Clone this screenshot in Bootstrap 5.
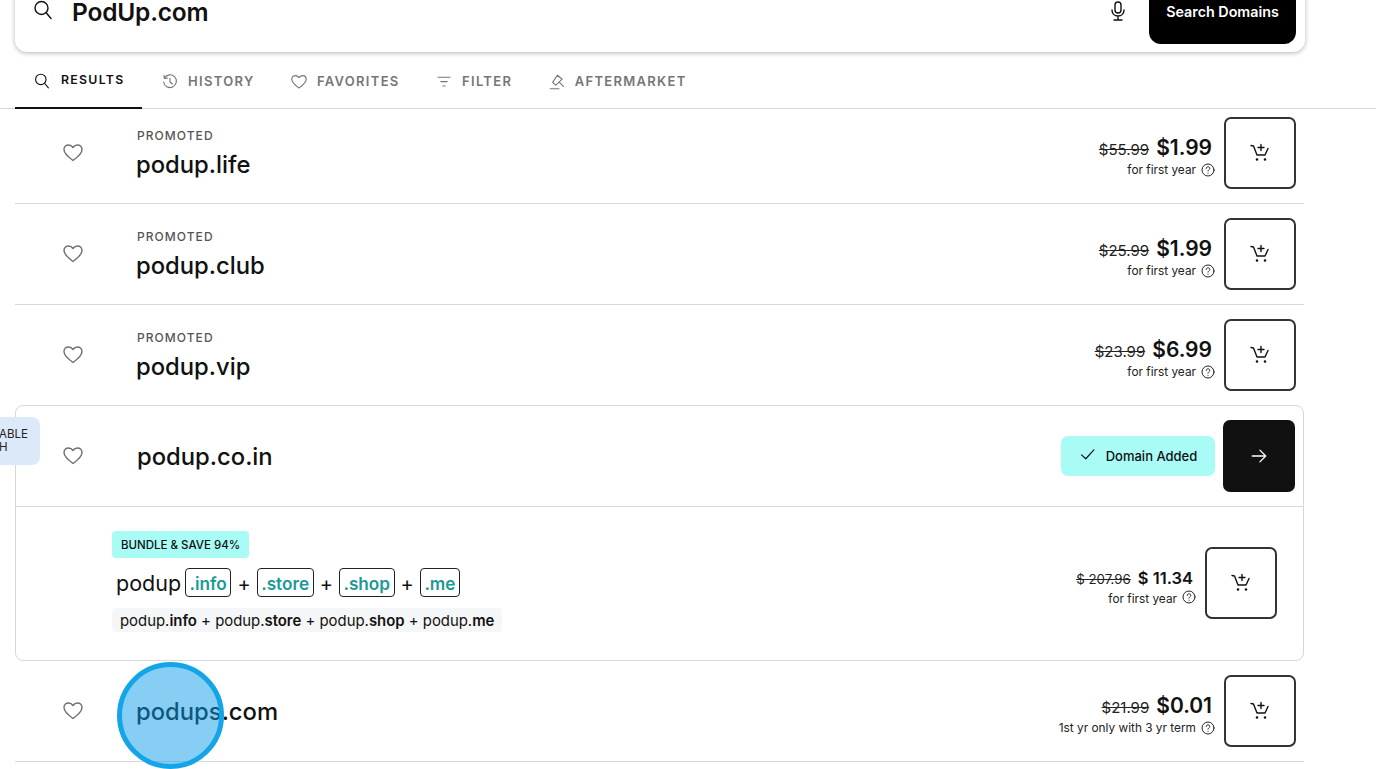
<!DOCTYPE html>
<html lang="en">
<head>
  <meta charset="UTF-8" />
  <title>PodUp.com domain search</title>
  <meta name="viewport" content="width=device-width, initial-scale=1" />
  <link href="https://cdn.jsdelivr.net/npm/bootstrap@5.3.2/dist/css/bootstrap.min.css" rel="stylesheet">
  <style>
    html, body { height: 769px; overflow: hidden; }
    body { font-family: "Inter", "Liberation Sans", sans-serif; color: #111; background: #fff; }
    svg.ico { fill: none; stroke: currentColor; stroke-width: 1.4; stroke-linecap: round; stroke-linejoin: round; flex: none; }
    svg.thin { stroke-width: 1; }

    .search-box { margin: -20px 71px 0 15px; height: 72px; padding: 0 9px 8px 18px; border-radius: 12px; background: #fff; box-shadow: 0 1px 5px rgba(0,0,0,.3); }
    .search-term { font-size: 24.5px; font-weight: 600; line-height: 1; letter-spacing: -.2px; margin-left: 19px; }
    .search-go { width: 147px; height: 64px; padding: 0; margin-left: 21px; background: #000; color: #fff; border-radius: 12px; border: 0; font-size: 14.3px; font-weight: 600; line-height: 1; align-self: flex-end; }
    .search-go:hover { background: #000; color: #fff; }
    .search-icon { margin-bottom: 4px; }
    .mic-icon { margin-bottom: 3px; }

    .tab-bar { height: 57px; padding-left: 15px; border-bottom: 1px solid #d6d6d6; }
    .tab-item { display: flex; align-items: center; gap: 10px; padding: 2px 17px 0 19.5px; margin: 0 0 -1px; height: 56px; color: #767676; font-size: 13px; font-weight: 600; letter-spacing: 1.3px; }
    .tab-item.on { color: #111; border-bottom: 2px solid #111; padding: 2px 17px 0 19px; margin-right: 1px; gap: 11px; font-size: 12.3px; height: 57px; }

    .result-list { width: 1289px; margin-left: 15px; }
    .result-row { height: 101px; padding: 14px 8px 14px 48px; border-bottom: 1px solid #d8d8d8; }
    .result-row.first { height: 95px; padding-top: 8px; }
    .result-row.before-card { height: 100px; border-bottom: 0; padding-bottom: 14px; }
    .fav { color: #6f6f6f; width: 20px; height: 20px; }
    .name-col { margin-left: 53px; }
    .promo { font-size: 12px; font-weight: 500; letter-spacing: 1.05px; color: #555; line-height: 14px; margin: 1px 0 7px 1px; }
    .dom-name { font-size: 23.8px; font-weight: 500; line-height: 29px; }
    .was { font-size: 15px; text-decoration: line-through; color: #222; margin-right: 7px; }
    .now { font-size: 21px; font-weight: 600; line-height: 28px; margin-right: 3px; }
    .term { font-size: 11.85px; line-height: 14px; color: #222; gap: 5px; margin-top: 1px; }
    .price-col { margin-right: 9px; padding-top: 4px; }
    .cart-btn { width: 72px; height: 72px; padding: 0; background: #fff; border: 2px solid #333; border-radius: 7px; color: #111; }
    .cart-btn:hover { background: #fff; color: #111; border-color: #333; }

    .added-card { width: 1289px; height: 256px; border: 1px solid #d8d8d8; border-radius: 8px; }
    .added-top { height: 101px; padding: 0 8px 0 47px; border-bottom: 1px solid #d8d8d8; }
    .added-name { margin-left: 54px; }
    .added-tag { left: 0; top: 417px; width: 40px; height: 48px; padding-top: 11px; background: #dce9f8; border-radius: 0 8px 8px 0; font-size: 11.5px; line-height: 13px; font-weight: 400; color: #222; overflow: hidden; white-space: nowrap; }
    .added-tag span { margin-left: -1px; display: block; }
    .added-pill { width: 154px; height: 40px; padding: 1px 0 0; margin-right: 8px; gap: 10px; background: #a9fcf6; border: 0; border-radius: 7px; color: #111; font-size: 13px; font-weight: 500; }
    .added-pill svg { margin-bottom: 4px; }
    .go-btn { width: 72px; height: 72px; padding: 0; background: #111; border: 0; border-radius: 7px; color: #fff; }

    .bundle { height: 154px; padding: 24px 26px 0 96px; }
    .bundle-tag { width: 137px; height: 27px; background: #a9fcf6; border-radius: 4px; font-size: 11.5px; font-weight: 500; line-height: 28px; text-align: center; white-space: nowrap; }
    .bundle-line { height: 29px; margin: 10px 0 11px 4px; font-size: 21.5px; line-height: 31px; white-space: nowrap; }
    .tld { display: inline-block; height: 29px; padding: 0 3.5px; border: 1px solid #222; border-radius: 4px; color: #1b9a95; font-size: 17.2px; font-weight: 600; line-height: 29px; vertical-align: top; }
    .plus { font-size: 20px; }
    .lead-tld { margin-left: 4px; }
    .bundle-names { display: inline-block; height: 24px; padding: 0 8px; background: #f5f6f7; border-radius: 4px; font-size: 14.9px; line-height: 27px; white-space: nowrap; }
    .bundle-names b { font-weight: 600; }
    .bundle-price { margin-top: 33px; padding-top: 0; }
    .bundle-price .was { font-size: 13.3px; }
    .bundle-price .now { font-size: 16.5px; }
    .bundle-price .term { margin-top: 0; }
    .bundle-price .term svg { margin-top: -4px; }

    .tap-mark { left: 117px; top: 662px; width: 107px; height: 107px; border: 5px solid #14a5e8; border-radius: 50%; background: rgba(15,157,235,.5); }
  </style>
</head>
<body class="position-relative">

  <svg width="0" height="0" class="position-absolute">
    <symbol id="i-search" viewBox="0 0 20 20"><circle cx="8.5" cy="8" r="6.5"/><path d="M13.200 12.800 18 18.500"/></symbol>
    <symbol id="i-mic" viewBox="0 0 20 20"><rect x="7" y="1" width="6" height="11" rx="3"/><path d="M4 9c0 3.600 2.500 6 6 6s6-2.400 6-6M10 15v3M6 19h8"/></symbol>
    <symbol id="i-history" viewBox="0 0 20 20"><path d="M3 5a8 8 0 1 1-1 5M2.500 1.500 3 5.500l4-.5M10 5.500V10l3 2.500"/></symbol>
    <symbol id="i-heart" viewBox="0 0 20 20"><path d="M10 17.500C6 14.500 1 11 1 6.500 1 3.500 3.300 2 5.500 2 7.500 2 9 3 10 4.500 11 3 12.500 2 14.500 2 16.700 2 19 3.500 19 6.500 19 11 14 14.500 10 17.500Z"/></symbol>
    <symbol id="i-filter" viewBox="0 0 20 20"><path d="M2.500 4h15M6 9.500h8M8.500 15h3"/></symbol>
    <symbol id="i-gavel" viewBox="0 0 20 20"><path d="M4.500 10.500 10.500 1.500l6 5-8 7.500-4-3.500ZM13 10.500l5 5M1.500 18.500h11"/></symbol>
    <symbol id="i-cart" viewBox="0 0 20 20"><path d="M1 2.500 3.500 3 7 12h8l3-6.500M11 1.500v6M8 4.500h6"/><circle cx="7" cy="16.500" r=".6"/><circle cx="15" cy="16.500" r=".6"/></symbol>
    <symbol id="i-help" viewBox="0 0 14 14"><circle cx="7" cy="7" r="6"/><path d="M5.200 5.400C5.300 4.300 6.100 3.800 7 3.800c1 0 1.800.6 1.800 1.600 0 1.300-1.800 1.400-1.800 2.700M7 10.200v.1"/></symbol>
    <symbol id="i-check" viewBox="0 0 20 20"><path d="M3 10.500 8 15 17.500 4.500"/></symbol>
    <symbol id="i-arrow" viewBox="0 0 20 20"><path d="M2.500 10h15M11 3.500l6.500 6.500-6.500 6.500"/></symbol>
  </svg>

  <div class="search-box d-flex align-items-center">
    <svg class="ico search-icon" width="20" height="20"><use href="#i-search"/></svg>
    <span class="search-term flex-grow-1">PodUp.com</span>
    <svg class="ico mic-icon" width="20" height="20"><use href="#i-mic"/></svg>
    <button class="btn search-go">Search Domains</button>
  </div>

  <nav class="tab-bar d-flex align-items-center">
    <span class="tab-item on"><svg class="ico" width="16" height="16"><use href="#i-search"/></svg>RESULTS</span>
    <span class="tab-item"><svg class="ico" width="16" height="16"><use href="#i-history"/></svg>HISTORY</span>
    <span class="tab-item"><svg class="ico" width="16" height="16"><use href="#i-heart"/></svg>FAVORITES</span>
    <span class="tab-item"><svg class="ico" width="16" height="16"><use href="#i-filter"/></svg>FILTER</span>
    <span class="tab-item"><svg class="ico" width="16" height="16"><use href="#i-gavel"/></svg>AFTERMARKET</span>
  </nav>

  <div class="result-list">
    <div class="result-row first d-flex align-items-center">
      <svg class="ico fav"><use href="#i-heart"/></svg>
      <div class="name-col flex-grow-1"><div class="promo">PROMOTED</div><div class="dom-name">podup.life</div></div>
      <div class="price-col text-end">
        <div><span class="was">$55.99</span><span class="now">$1.99</span></div>
        <div class="term d-flex justify-content-end align-items-center">for first year <svg class="ico thin" width="14" height="14"><use href="#i-help"/></svg></div>
      </div>
      <button class="btn cart-btn"><svg class="ico d-block mx-auto" width="20" height="20"><use href="#i-cart"/></svg></button>
    </div>

    <div class="result-row d-flex align-items-center">
      <svg class="ico fav"><use href="#i-heart"/></svg>
      <div class="name-col flex-grow-1"><div class="promo">PROMOTED</div><div class="dom-name">podup.club</div></div>
      <div class="price-col text-end">
        <div><span class="was">$25.99</span><span class="now">$1.99</span></div>
        <div class="term d-flex justify-content-end align-items-center">for first year <svg class="ico thin" width="14" height="14"><use href="#i-help"/></svg></div>
      </div>
      <button class="btn cart-btn"><svg class="ico d-block mx-auto" width="20" height="20"><use href="#i-cart"/></svg></button>
    </div>

    <div class="result-row before-card d-flex align-items-center">
      <svg class="ico fav"><use href="#i-heart"/></svg>
      <div class="name-col flex-grow-1"><div class="promo">PROMOTED</div><div class="dom-name">podup.vip</div></div>
      <div class="price-col text-end">
        <div><span class="was">$23.99</span><span class="now">$6.99</span></div>
        <div class="term d-flex justify-content-end align-items-center">for first year <svg class="ico thin" width="14" height="14"><use href="#i-help"/></svg></div>
      </div>
      <button class="btn cart-btn"><svg class="ico d-block mx-auto" width="20" height="20"><use href="#i-cart"/></svg></button>
    </div>

    <div class="added-card">
      <div class="added-top d-flex align-items-center">
        <svg class="ico fav"><use href="#i-heart"/></svg>
        <div class="added-name flex-grow-1 dom-name">podup.co.in</div>
        <button class="btn added-pill d-flex align-items-center justify-content-center"><svg class="ico" width="17" height="17"><use href="#i-check"/></svg>Domain Added</button>
        <button class="btn go-btn"><svg class="ico d-block mx-auto" width="18" height="18"><use href="#i-arrow"/></svg></button>
      </div>
      <div class="bundle d-flex align-items-start">
        <div class="flex-grow-1">
          <div class="bundle-tag">BUNDLE &amp; SAVE 94%</div>
          <div class="bundle-line">podup<span class="tld lead-tld">.info</span> <span class="plus">+</span> <span class="tld">.store</span> <span class="plus">+</span> <span class="tld">.shop</span> <span class="plus">+</span> <span class="tld">.me</span></div>
          <div class="bundle-names">podup.<b>info</b> + podup.<b>store</b> + podup.<b>shop</b> + podup.<b>me</b></div>
        </div>
        <div class="price-col bundle-price text-end">
          <div><span class="was">$ 207.96</span><span class="now">$ 11.34</span></div>
          <div class="term d-flex justify-content-end align-items-center">for first year <svg class="ico thin" width="14" height="14"><use href="#i-help"/></svg></div>
        </div>
        <button class="btn cart-btn mt-3"><svg class="ico d-block mx-auto" width="20" height="20"><use href="#i-cart"/></svg></button>
      </div>
    </div>

    <div class="result-row d-flex align-items-center">
      <svg class="ico fav"><use href="#i-heart"/></svg>
      <div class="name-col flex-grow-1"><div class="dom-name">podups.com</div></div>
      <div class="price-col text-end">
        <div><span class="was">$21.99</span><span class="now">$0.01</span></div>
        <div class="term d-flex justify-content-end align-items-center">1st yr only with 3 yr term <svg class="ico thin" width="14" height="14"><use href="#i-help"/></svg></div>
      </div>
      <button class="btn cart-btn"><svg class="ico d-block mx-auto" width="20" height="20"><use href="#i-cart"/></svg></button>
    </div>
  </div>

  <div class="added-tag position-absolute"><span>ABLE</span><span>H</span></div>
  <div class="tap-mark position-absolute"></div>

  <script src="https://cdn.jsdelivr.net/npm/bootstrap@5.3.2/dist/js/bootstrap.bundle.min.js"></script>
</body>
</html>
